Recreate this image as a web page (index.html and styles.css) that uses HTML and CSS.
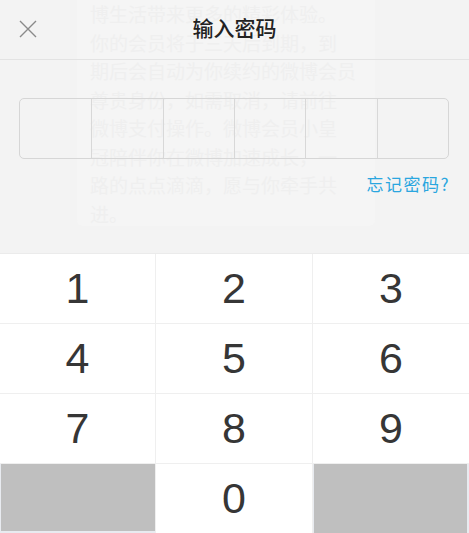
FILE: index.html
```html
<!DOCTYPE html>
<html lang="zh-CN">
<head>
    <meta charset="UTF-8">
    <meta name="viewport" content="width=device-width, initial-scale=1.0">
    <title>输入密码</title>
    <link rel="stylesheet" href="styles.css">
</head>
<body>
    <div id="screen">
        <!-- page underneath, seen through the overlay -->
        <div class="ghost">
            <p>
                博生活带来更多的精彩体验。<br>
                你的会员将于三天后到期，到<br>
                期后会自动为你续约的微博会员<br>
                尊贵身份，如需取消，请前往<br>
                微博支付操作。微博会员小皇<br>
                冠陪伴你在微博加速成长，一<br>
                路的点点滴滴，愿与你牵手共<br>
                进。
            </p>
        </div>

        <div class="header">
            <button class="close" aria-label="关闭">
                <svg width="18" height="18" viewBox="0 0 18 18">
                    <path d="M1 1 L17 17 M17 1 L1 17" stroke="#8a8a8a" stroke-width="1.4" fill="none"/>
                </svg>
            </button>
            <h1 class="title">输入密码</h1>
        </div>

        <div class="pwd">
            <div class="slot"></div>
            <div class="slot"></div>
            <div class="slot"></div>
            <div class="slot"></div>
            <div class="slot"></div>
            <div class="slot"></div>
        </div>

        <div class="forgot"><a href="#">忘记密码?</a></div>

        <div class="keypad">
            <div class="key">1</div>
            <div class="key">2</div>
            <div class="key">3</div>
            <div class="key">4</div>
            <div class="key">5</div>
            <div class="key">6</div>
            <div class="key">7</div>
            <div class="key">8</div>
            <div class="key">9</div>
            <div class="key blank left"></div>
            <div class="key">0</div>
            <div class="key blank right"></div>
        </div>
    </div>
</body>
</html>
```

FILE: styles.css
```css
* {
    margin: 0;
    padding: 0;
    box-sizing: border-box;
}

body {
    font-family: "Liberation Sans", "Noto Sans CJK SC", sans-serif;
    background-color: #f3f3f3;
}

#screen {
    position: relative;
    width: 469px;
    height: 533px;
    display: flex;
    flex-direction: column;
    overflow: hidden;
    background-color: #f3f3f3;
}

/* faint content of the page behind the overlay */
.ghost {
    position: absolute;
    left: 77px;
    top: -17px;
    width: 298px;
    height: 243px;
    padding: 17px 0 0 13px;
    background-color: #f5f5f5;
    border-radius: 6px;
}

.ghost p {
    font-family: "Noto Sans CJK SC", sans-serif;
    font-size: 19px;
    line-height: 28.5px;
    color: #efefef;
    white-space: nowrap;
}

.header {
    position: relative;
    height: 60px;
    border-bottom: 1px solid #e3e3e3;
    display: flex;
    align-items: center;
    justify-content: center;
}

.close {
    position: absolute;
    left: 19px;
    top: 20px;
    width: 18px;
    height: 18px;
    border: none;
    background: none;
    display: flex;
}

.title {
    font-family: "Noto Sans CJK SC", sans-serif;
    font-size: 21px;
    font-weight: 500;
    color: #222;
    margin-top: -5px;
}

.pwd {
    position: relative;
    margin: 38px 20px 0 19px;
    height: 61px;
    border: 1px solid #d6d6d6;
    border-radius: 5px;
    display: grid;
    grid-template-columns: repeat(6, 1fr);
}

.slot + .slot {
    border-left: 1px solid #d8d8d8;
}

.forgot {
    position: relative;
    text-align: right;
    padding-right: 19px;
    margin-top: 13px;
}

.forgot a {
    font-family: "Noto Sans CJK SC", sans-serif;
    font-size: 17px;
    line-height: 24px;
    letter-spacing: 1.5px;
    color: #2aa6df;
    text-decoration: none;
}

.keypad {
    position: relative;
    margin-top: auto;
    display: grid;
    grid-template-columns: 155px 156px 156px;
    grid-auto-rows: 69px;
    gap: 1px;
    border-top: 1px solid #ebebeb;
    background-color: #efefef;
}

.key {
    background-color: #fff;
    display: flex;
    align-items: center;
    justify-content: center;
    font-size: 43px;
    color: #363636;
}

.key.blank {
    background-color: #bfbfbf;
}

.key.left {
    border-left: 1px solid #e8ebf0;
    border-bottom: 2px solid #e8ebf0;
}

.key.right {
    border-left: 1px solid #e8ebf0;
    border-right: 2px solid #e8ebf0;
}
```
